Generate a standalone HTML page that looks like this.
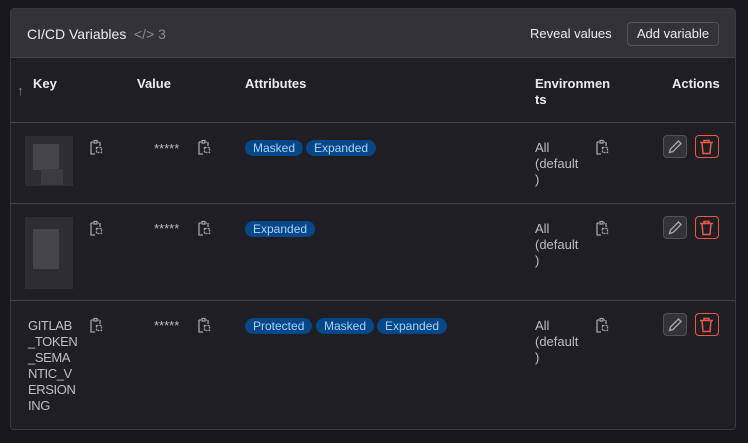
<!DOCTYPE html>
<html><head><style>
*{box-sizing:border-box;margin:0;padding:0}
body{width:748px;height:443px;background:#18171d;font-family:"Liberation Sans",sans-serif;font-size:13px;color:#ececef;position:relative;overflow:hidden}
.card{position:absolute;left:10px;top:8px;width:726px;height:422px;background:#1f1e24;border:1px solid #3a393f;border-radius:4px;overflow:hidden}
.hdr{position:absolute;left:0;top:0;width:100%;height:49px;background:#333238;border-bottom:1px solid #434248}
.a{position:absolute;white-space:nowrap}
.th{font-weight:bold;color:#ececef}
.line{position:absolute;left:0;width:100%;height:1px;background:#434248}
.badge{position:absolute;height:16px;line-height:16px;border-radius:8px;background:#064787;color:#a8d2ff;font-size:12px;padding:0 8px}
.muted{color:#bfbfc3}
.btn{position:absolute;width:24px;height:23px;border:1px solid #535158;border-radius:4px;background:#333238}
.del{border-color:#ec5941;background:#1f1e24}
.blk{position:absolute;background:#3a393f}
svg{position:absolute}
</style></head><body>
<div class="card">
<div class="hdr">
<div class="a" style="left:16px;top:17px;font-size:14px;color:#ececef">CI/CD Variables</div>
<div class="a" style="left:123px;top:17px;font-size:14px;color:#89888d">&lt;/&gt; 3</div>
<div class="a" style="left:519px;top:17px;font-size:13px;color:#ececef">Reveal values</div>
<div class="a" style="left:616px;top:13px;width:92px;height:24px;border:1px solid #535158;border-radius:4px;text-align:center;line-height:22px;font-size:13px">Add variable</div>
</div>
<div class="a" style="left:6px;top:74px;color:#89888d;font-size:13px">↑</div>
<div class="a th" style="left:22px;top:67px">Key</div>
<div class="a th" style="left:126px;top:67px">Value</div>
<div class="a th" style="left:234px;top:67px">Attributes</div>
<div class="a th" style="left:524px;top:67px;line-height:16px">Environmen<br>ts</div>
<div class="a th" style="left:661px;top:67px">Actions</div>
<div class="line" style="top:113px"></div>
<div class="line" style="top:194px"></div>
<div class="line" style="top:291px"></div>

<div class="blk" style="left:14px;top:127px;width:48px;height:50px;background:#2e2d33"></div>
<div class="blk" style="left:22px;top:135px;width:26px;height:26px;background:#45444a"></div>
<div class="blk" style="left:30px;top:160px;width:22px;height:16px;background:#3c3b41"></div>
<div class="a muted" style="left:143px;top:132px">*****</div>
<div class="badge" style="left:234px;top:131px">Masked</div>
<div class="badge" style="left:295px;top:131px">Expanded</div>
<div class="a muted" style="left:524px;top:131px;line-height:16px">All<br>(default<br>)</div>

<div class="blk" style="left:14px;top:208px;width:48px;height:72px;background:#2e2d33"></div>
<div class="blk" style="left:22px;top:220px;width:26px;height:40px;background:#45444a"></div>
<div class="a muted" style="left:143px;top:212px">*****</div>
<div class="badge" style="left:234px;top:212px">Expanded</div>
<div class="a muted" style="left:524px;top:212px;line-height:16px">All<br>(default<br>)</div>

<div class="a muted" style="left:17px;top:309px;line-height:16px;letter-spacing:-0.4px">GITLAB<br>_TOKEN<br>_SEMA<br>NTIC_V<br>ERSION<br>ING</div>
<div class="a muted" style="left:143px;top:309px">*****</div>
<div class="badge" style="left:234px;top:309px">Protected</div>
<div class="badge" style="left:305px;top:309px">Masked</div>
<div class="badge" style="left:366px;top:309px">Expanded</div>
<div class="a muted" style="left:524px;top:309px;line-height:16px">All<br>(default<br>)</div>
</div>

<svg width="0" height="0"><defs>
<g id="clip"><path d="M2 3h2M10 3h-1M2 3v12h4M11 3v4M5 1.5h3v2.5h-3z" fill="none" stroke="#a4a3a8" stroke-width="1.3"/><rect x="7.5" y="8.5" width="5" height="5" fill="none" stroke="#a4a3a8" stroke-width="1.3" stroke-dasharray="2 1"/></g>
<g id="pen"><path d="M2.5 14.5l1-3.5 8-8 2.5 2.5-8 8z" fill="none" stroke="#a4a3a8" stroke-width="1.4"/></g>
<g id="trash"><path d="M2 4.5h13M6 4.5V2.5h5v2M4 4.5l1 11h7l1-11" fill="none" stroke="#ec5941" stroke-width="1.5"/></g>
</defs></svg>
<svg style="left:89px;top:139px" width="14" height="16"><use href="#clip"/></svg>
<svg style="left:197px;top:139px" width="14" height="16"><use href="#clip"/></svg>
<svg style="left:595px;top:139px" width="14" height="16"><use href="#clip"/></svg>
<svg style="left:89px;top:220px" width="14" height="16"><use href="#clip"/></svg>
<svg style="left:197px;top:220px" width="14" height="16"><use href="#clip"/></svg>
<svg style="left:595px;top:220px" width="14" height="16"><use href="#clip"/></svg>
<svg style="left:89px;top:317px" width="14" height="16"><use href="#clip"/></svg>
<svg style="left:197px;top:317px" width="14" height="16"><use href="#clip"/></svg>
<svg style="left:595px;top:317px" width="14" height="16"><use href="#clip"/></svg>

<div class="btn" style="left:663px;top:135px"></div>
<div class="btn del" style="left:695px;top:135px"></div>
<div class="btn" style="left:663px;top:216px"></div>
<div class="btn del" style="left:695px;top:216px"></div>
<div class="btn" style="left:663px;top:313px"></div>
<div class="btn del" style="left:695px;top:313px"></div>
<svg style="left:667px;top:138px" width="17" height="17"><use href="#pen"/></svg>
<svg style="left:698px;top:138px" width="17" height="17"><use href="#trash"/></svg>
<svg style="left:667px;top:219px" width="17" height="17"><use href="#pen"/></svg>
<svg style="left:698px;top:219px" width="17" height="17"><use href="#trash"/></svg>
<svg style="left:667px;top:316px" width="17" height="17"><use href="#pen"/></svg>
<svg style="left:698px;top:316px" width="17" height="17"><use href="#trash"/></svg>
</body></html>
